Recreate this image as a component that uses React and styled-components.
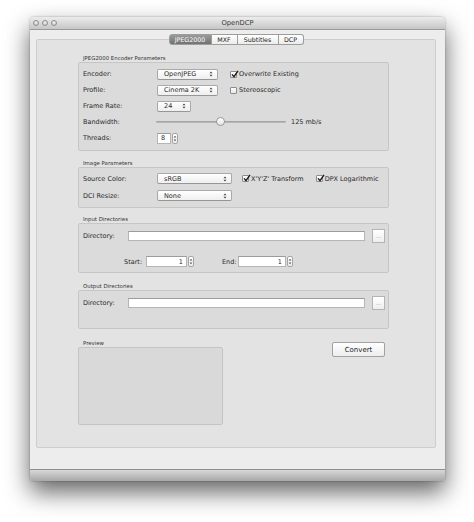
import React from "react";
import styled, { createGlobalStyle } from "styled-components";

const GlobalStyle = createGlobalStyle`
  html, body {
    margin: 0;
    padding: 0;
    background: #ffffff;
  }
  body {
    font-family: "DejaVu Sans", "Liberation Sans", sans-serif;
    color: #2a2a2a;
  }
`;

/* window chrome */
const Page = styled.div`
  width: 474px;
  height: 522px;
  padding: 17px 0 0 30px;
  box-sizing: border-box;
`;

const Window = styled.div`
  width: 415px;
  height: 464px;
  display: flex;
  flex-direction: column;
  border-radius: 4px 4px 2px 2px;
  box-shadow: 0 11px 24px rgba(0, 0, 0, 0.62), 0 0 2px rgba(0, 0, 0, 0.35);
  overflow: hidden;
`;

const TitleBar = styled.div`
  height: 12px;
  display: grid;
  grid-template-columns: 1fr auto 1fr;
  align-items: center;
  background: linear-gradient(#ececec, #c6c6c6);
  border-bottom: 1px solid #9b9b9b;
  font-size: 6.8px;
  color: #3a3a3a;
`;

const Lights = styled.div`
  display: flex;
  gap: 3px;
  padding-left: 3px;
`;

const Light = styled.span`
  width: 6px;
  height: 6px;
  border-radius: 50%;
  box-sizing: border-box;
  border: 1px solid #8e8e8e;
  background: radial-gradient(circle at 50% 35%, #f4f4f4, #bdbdbd);
`;

const Body = styled.div`
  flex: 1;
  display: flex;
  flex-direction: column;
  background: #ededed;
  padding: 4px 9px 21px 6px;
`;

const BottomBar = styled.div`
  height: 11px;
  background: linear-gradient(#d7d7d7, #a8a8a8);
  border-top: 1px solid #8f8f8f;
`;

/* tabs */
const TabRow = styled.div`
  display: flex;
  justify-content: center;
  margin-bottom: -6px;
  position: relative;
  z-index: 1;
`;

const Tab = styled.div`
  width: ${(p) => p.w}px;
  height: 11px;
  box-sizing: border-box;
  display: flex;
  align-items: center;
  justify-content: center;
  font-size: 6.3px;
  border: 1px solid #9d9d9d;
  border-left-width: ${(p) => (p.first ? 1 : 0)}px;
  color: ${(p) => (p.active ? "#fff" : "#222")};
  background: ${(p) =>
    p.active
      ? "linear-gradient(#9a9a9a, #727272)"
      : "linear-gradient(#ffffff, #ececec)"};
  &:first-child {
    border-radius: 3px 0 0 3px;
  }
  &:last-child {
    border-radius: 0 3px 3px 0;
  }
`;

const Pane = styled.div`
  flex: 1;
  background: #e3e3e3;
  border: 1px solid #cdcdcd;
  border-radius: 2px;
  padding: 14px 0 0 41px;
`;

const Content = styled.div`
  width: 311px;
  display: flex;
  flex-direction: column;
`;

/* groups */
const GroupTitle = styled.div`
  height: 8px;
  line-height: 8px;
  font-size: 5.4px;
  padding-left: 5px;
  color: #333;
  margin-top: ${(p) => p.mt || 0}px;
`;

const GroupBox = styled.div`
  background: #dbdbdb;
  border: 1px solid #c6c6c6;
  border-radius: 2px;
  padding: ${(p) => p.pad};
  display: flex;
  flex-direction: column;
`;

const Row = styled.div`
  height: ${(p) => p.h || 16}px;
  margin-top: ${(p) => p.mt || 0}px;
  display: flex;
  align-items: center;
  padding-left: 4px;
  font-size: 6.5px;
`;

const Label = styled.span`
  width: ${(p) => p.w}px;
  margin-left: ${(p) => p.ml || 0}px;
  flex-shrink: 0;
  white-space: nowrap;
`;

/* controls */
const PopupBox = styled.div`
  width: ${(p) => p.w}px;
  height: 11px;
  box-sizing: border-box;
  display: flex;
  align-items: center;
  justify-content: space-between;
  padding: 0 4px 0 6px;
  background: linear-gradient(#ffffff, #efefef);
  border: 1px solid #a9a9a9;
  border-bottom-color: #969696;
  border-radius: 2px;
  font-size: 6.5px;
`;

const Arrows = () => (
  <svg width="4" height="6" viewBox="0 0 4 6">
    <path d="M0.5 2.3 L2 0.6 L3.5 2.3 Z M0.5 3.7 L2 5.4 L3.5 3.7 Z" fill="#444" />
  </svg>
);

const Popup = ({ w, children }) => (
  <PopupBox w={w}>
    <span>{children}</span>
    <Arrows />
  </PopupBox>
);

const CheckWrap = styled.label`
  display: flex;
  align-items: center;
  gap: 2px;
  margin-left: ${(p) => p.ml || 0}px;
  white-space: nowrap;
`;

const Box = styled.span`
  width: 7px;
  height: 7px;
  box-sizing: border-box;
  border: 1px solid #8d8d8d;
  border-radius: 1px;
  background: linear-gradient(#ffffff, #e6e6e6);
  position: relative;
  svg {
    position: absolute;
    left: 0;
    top: -2px;
  }
`;

const Check = ({ checked, ml, children }) => (
  <CheckWrap ml={ml}>
    <Box>
      {checked && (
        <svg width="8" height="8" viewBox="0 0 8 8">
          <path d="M1 4.4 L3 6.6 L7 0.8" fill="none" stroke="#1c1c1c" strokeWidth="1.4" />
        </svg>
      )}
    </Box>
    {children}
  </CheckWrap>
);

const Track = styled.div`
  width: 130px;
  height: 2px;
  background: linear-gradient(#9a9a9a, #c2c2c2);
  border-radius: 1px;
  position: relative;
`;

const Knob = styled.div`
  position: absolute;
  left: 60px;
  top: -4px;
  width: 9px;
  height: 9px;
  box-sizing: border-box;
  border-radius: 50%;
  border: 1px solid #9a9a9a;
  background: linear-gradient(#ffffff, #e4e4e4);
`;

const Value = styled.span`
  margin-left: 5px;
  white-space: nowrap;
`;

const Field = styled.div`
  width: ${(p) => p.w}px;
  height: ${(p) => p.h || 11}px;
  box-sizing: border-box;
  background: #fff;
  border: 1px solid #b5b5b5;
  border-top-color: #9c9c9c;
  display: flex;
  align-items: center;
  justify-content: ${(p) => (p.right ? "flex-end" : "flex-start")};
  padding: 0 3px;
  font-size: 6.5px;
`;

const StepperBox = styled.div`
  width: 6px;
  height: 11px;
  margin-left: 1px;
  box-sizing: border-box;
  border: 1px solid #a5a5a5;
  border-radius: 2px;
  background: linear-gradient(#ffffff, #ededed);
  display: flex;
  align-items: center;
  justify-content: center;
`;

const Stepper = () => (
  <StepperBox>
    <svg width="4" height="7" viewBox="0 0 4 7">
      <path d="M0.6 2.6 L2 0.8 L3.4 2.6 Z M0.6 4.4 L2 6.2 L3.4 4.4 Z" fill="#555" />
    </svg>
  </StepperBox>
);

const BrowseButton = styled.div`
  width: 13px;
  height: 14px;
  margin-left: 7px;
  box-sizing: border-box;
  background: linear-gradient(#ffffff, #eeeeee);
  border: 1px solid #b4b4b4;
  display: flex;
  align-items: center;
  justify-content: center;
  font-size: 5px;
  color: #888;
`;

const Bottom = styled.div`
  display: flex;
  justify-content: space-between;
  margin-top: 10px;
  padding-right: 4px;
`;

const PreviewCol = styled.div`
  width: 145px;
  display: flex;
  flex-direction: column;
`;

const PreviewBox = styled.div`
  height: 78px;
  box-sizing: border-box;
  background: #d9d9d9;
  border: 1px solid #c4c4c4;
  border-radius: 2px;
`;

const ConvertButton = styled.div`
  width: 53px;
  height: 15px;
  margin-top: 3px;
  box-sizing: border-box;
  background: linear-gradient(#ffffff, #ededed);
  border: 1px solid #a2a2a2;
  border-radius: 2px;
  display: flex;
  align-items: center;
  justify-content: center;
  font-size: 7px;
  color: #222;
`;

const tabs = [
  { name: "JPEG2000", w: 43 },
  { name: "MXF", w: 26 },
  { name: "Subtitles", w: 41 },
  { name: "DCP", w: 25 },
];

export default function App() {
  return (
    <Page>
      <GlobalStyle />
      <Window>
        <TitleBar>
          <Lights>
            <Light />
            <Light />
            <Light />
          </Lights>
          <span>OpenDCP</span>
          <span />
        </TitleBar>
        <Body>
          <TabRow>
            {tabs.map((t, i) => (
              <Tab key={t.name} w={t.w} first={i === 0} active={i === 0}>
                {t.name}
              </Tab>
            ))}
          </TabRow>
          <Pane>
            <Content>
              <GroupTitle>JPEG2000 Encoder Parameters</GroupTitle>
              <GroupBox pad="3px 0 4px">
                <Row>
                  <Label w={74}>Encoder:</Label>
                  <Popup w={61}>OpenJPEG</Popup>
                  <Check checked ml={12}>Overwrite Existing</Check>
                </Row>
                <Row>
                  <Label w={74}>Profile:</Label>
                  <Popup w={61}>Cinema 2K</Popup>
                  <Check ml={12}>Stereoscopic</Check>
                </Row>
                <Row>
                  <Label w={74}>Frame Rate:</Label>
                  <Popup w={34}>24</Popup>
                </Row>
                <Row>
                  <Label w={73}>Bandwidth:</Label>
                  <Track>
                    <Knob />
                  </Track>
                  <Value>125 mb/s</Value>
                </Row>
                <Row>
                  <Label w={74}>Threads:</Label>
                  <Field w={14}>8</Field>
                  <Stepper />
                </Row>
              </GroupBox>

              <GroupTitle mt={8}>Image Parameters</GroupTitle>
              <GroupBox pad="2px 0 3px">
                <Row h={17}>
                  <Label w={74}>Source Color:</Label>
                  <Popup w={75}>sRGB</Popup>
                  <Check checked ml={10}>X'Y'Z' Transform</Check>
                  <Check checked ml={12}>DPX Logarithmic</Check>
                </Row>
                <Row h={17}>
                  <Label w={74}>DCI Resize:</Label>
                  <Popup w={75}>None</Popup>
                </Row>
              </GroupBox>

              <GroupTitle mt={7}>Input Directories</GroupTitle>
              <GroupBox pad="4px 0 4px">
                <Row h={15}>
                  <Label w={45}>Directory:</Label>
                  <Field w={237} h={10} />
                  <BrowseButton>...</BrowseButton>
                </Row>
                <Row h={13} mt={12}>
                  <Label w={22} ml={41}>Start:</Label>
                  <Field w={41} right>1</Field>
                  <Stepper />
                  <Label w={16} ml={28}>End:</Label>
                  <Field w={48} right>1</Field>
                  <Stepper />
                </Row>
              </GroupBox>

              <GroupTitle mt={9}>Output Directories</GroupTitle>
              <GroupBox pad="4px 0 18px">
                <Row h={15}>
                  <Label w={45}>Directory:</Label>
                  <Field w={237} h={10} />
                  <BrowseButton>...</BrowseButton>
                </Row>
              </GroupBox>

              <Bottom>
                <PreviewCol>
                  <GroupTitle>Preview</GroupTitle>
                  <PreviewBox />
                </PreviewCol>
                <ConvertButton>Convert</ConvertButton>
              </Bottom>
            </Content>
          </Pane>
        </Body>
        <BottomBar />
      </Window>
    </Page>
  );
}
